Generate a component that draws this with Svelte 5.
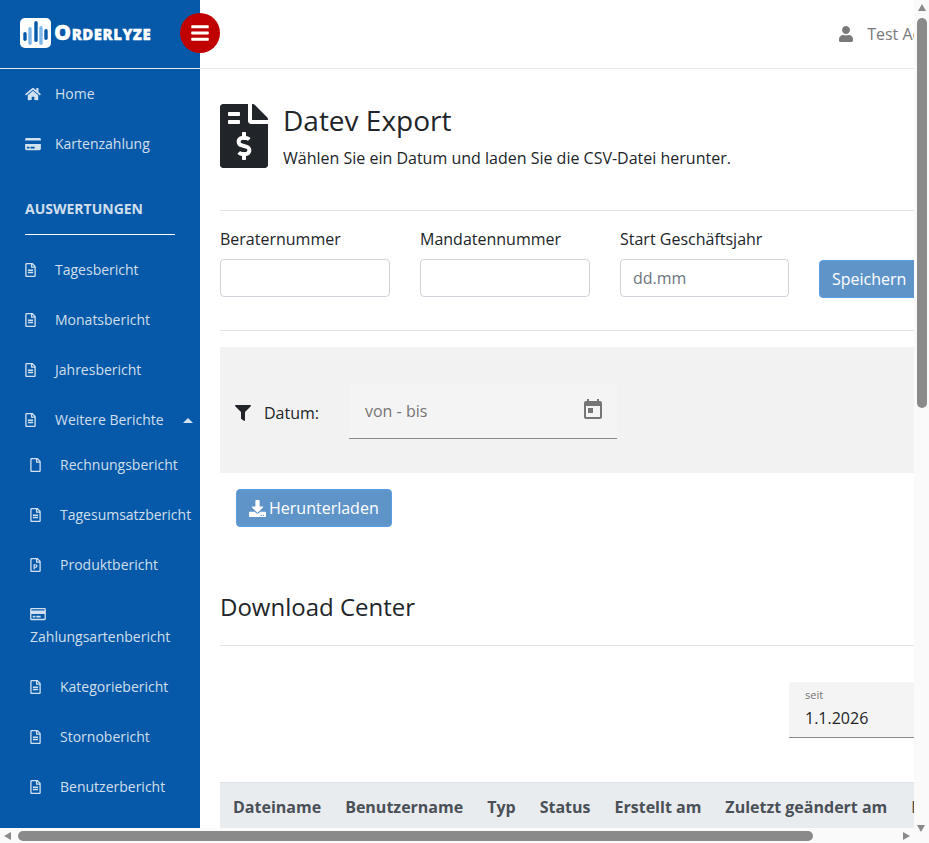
<script>
  const far = {
    fileAlt: "M288 248v28c0 6.6-5.4 12-12 12H108c-6.6 0-12-5.4-12-12v-28c0-6.6 5.4-12 12-12h168c6.6 0 12 5.4 12 12zm-12 72H108c-6.6 0-12 5.4-12 12v28c0 6.6 5.4 12 12 12h168c6.6 0 12-5.4 12-12v-28c0-6.6-5.4-12-12-12zm108-188.1V464c0 26.5-21.5 48-48 48H48c-26.5 0-48-21.5-48-48V48C0 21.5 21.5 0 48 0h204.1C264.8 0 277 5.1 286 14.1L369.9 98c9 8.9 14.1 21.2 14.1 33.9zm-128-80V128h76.1L256 51.9zM336 464V176H232c-13.3 0-24-10.7-24-24V48H48v416h288z",
    file: "M369.9 97.9L286 14C277 5 264.8-.1 252.1-.1H48C21.5 0 0 21.5 0 48v416c0 26.5 21.5 48 48 48h288c26.5 0 48-21.5 48-48V131.9c0-12.7-5.1-25-14.1-34zM332.1 128H256V51.9l76.1 76.1zM48 464V48h160v104c0 13.3 10.7 24 24 24h104v288H48z",
    filePpt: "M369.9 97.9L286 14C277 5 264.8-.1 252.1-.1H48C21.5 0 0 21.5 0 48v416c0 26.5 21.5 48 48 48h288c26.5 0 48-21.5 48-48V131.9c0-12.7-5.1-25-14.1-34zM332.1 128H256V51.9l76.1 76.1zM48 464V48h160v104c0 13.3 10.7 24 24 24h104v288H48zm72-60V236c0-6.6 5.4-12 12-12h69.2c36.7 0 62.8 27 62.8 66.3 0 74.3-68.7 66.5-95.5 66.5V404c0 6.6-5.4 12-12 12H132c-6.6 0-12-5.4-12-12zm48.5-87.4h23c7.9 0 13.9-2.4 18.1-7.2 8.5-9.8 8.4-28.5.1-37.8-4.1-4.6-9.9-7-17.4-7h-23.9v52z",
    card: "M527.9 32H48.1C21.5 32 0 53.5 0 80v352c0 26.5 21.5 48 48.1 48h479.8c26.6 0 48.1-21.5 48.1-48V80c0-26.5-21.5-48-48.1-48zM54.1 80h467.8c3.3 0 6 2.7 6 6v42H48.1V86c0-3.3 2.7-6 6-6zm467.8 352H54.1c-3.3 0-6-2.7-6-6V256h479.8v170c0 3.3-2.7 6-6 6zM192 332v40c0 6.6-5.4 12-12 12h-72c-6.6 0-12-5.4-12-12v-40c0-6.6 5.4-12 12-12h72c6.6 0 12 5.4 12 12zm192 0v40c0 6.6-5.4 12-12 12H236c-6.6 0-12-5.4-12-12v-40c0-6.6 5.4-12 12-12h136c6.6 0 12 5.4 12 12z"
  };
  const home = "M280.37 148.26L96 300.11V464a16 16 0 0 0 16 16l112.06-.29a16 16 0 0 0 15.92-16V368a16 16 0 0 1 16-16h64a16 16 0 0 1 16 16v95.64a16 16 0 0 0 16 16.05L464 480a16 16 0 0 0 16-16V300L295.67 148.26a12.19 12.19 0 0 0-15.3 0zM571.6 251.47L488 182.56V44.05a12 12 0 0 0-12-12h-56a12 12 0 0 0-12 12v72.61L318.47 43a48 48 0 0 0-61 0L4.34 251.47a12 12 0 0 0-1.6 16.9l25.5 31A12 12 0 0 0 45.15 301l235.22-193.74a12.19 12.19 0 0 1 15.3 0L530.9 301a12 12 0 0 0 16.9-1.6l25.5-31a12 12 0 0 0-1.7-16.93z";
  const cardSolid = "M0 432c0 26.5 21.5 48 48 48h480c26.5 0 48-21.5 48-48V256H0v176zm192-68c0-6.6 5.4-12 12-12h136c6.6 0 12 5.4 12 12v40c0 6.6-5.4 12-12 12H204c-6.6 0-12-5.4-12-12v-40zm-128 0c0-6.6 5.4-12 12-12h72c6.6 0 12 5.4 12 12v40c0 6.6-5.4 12-12 12H76c-6.6 0-12-5.4-12-12v-40zM576 80v48H0V80c0-26.5 21.5-48 48-48h480c26.5 0 48 21.5 48 48z";
  const bars = "M16 132h416c8.837 0 16-7.163 16-16V76c0-8.837-7.163-16-16-16H16C7.163 60 0 67.163 0 76v40c0 8.837 7.163 16 16 16zm0 160h416c8.837 0 16-7.163 16-16v-40c0-8.837-7.163-16-16-16H16c-8.837 0-16 7.163-16 16v40c0 8.837 7.163 16 16 16zm0 160h416c8.837 0 16-7.163 16-16v-40c0-8.837-7.163-16-16-16H16c-8.837 0-16 7.163-16 16v40c0 8.837 7.163 16 16 16z";
  const user = "M224 256c70.7 0 128-57.3 128-128S294.7 0 224 0 96 57.3 96 128s57.3 128 128 128zm89.6 32h-16.7c-22.2 10.2-46.9 16-72.9 16s-50.6-5.8-72.9-16h-16.7C60.2 288 0 348.2 0 422.4V464c0 26.5 21.5 48 48 48h352c26.5 0 48-21.5 48-48v-41.6c0-74.2-60.2-134.4-134.4-134.4z";
  const filter = "M487.976 0H24.028C2.71 0-8.047 25.866 7.058 40.971L192 225.941V432c0 7.831 3.821 15.17 10.237 19.662l80 55.98C298.02 518.69 320 507.493 320 487.98V225.941l184.947-184.97C520.021 25.896 509.338 0 487.976 0z";
  const download = "M216 0h80c13.3 0 24 10.7 24 24v168h87.7c17.8 0 26.7 21.5 14.1 34.1L269.7 378.3c-7.5 7.5-19.8 7.5-27.3 0L90.1 226.1c-12.6-12.6-3.7-34.1 14.1-34.1H192V24c0-13.3 10.7-24 24-24zm296 376v112c0 13.3-10.7 24-24 24H24c-13.3 0-24-10.7-24-24V376c0-13.3 10.7-24 24-24h146.7l49 49c20.1 20.1 52.5 20.1 72.6 0l49-49H488c13.3 0 24 10.7 24 24zm-124 88c0-11-9-20-20-20s-20 9-20 20 9 20 20 20 20-9 20-20zm64 0c0-11-9-20-20-20s-20 9-20 20 9 20 20 20 20-9 20-20z";
  const invoice = "M377 105L279.1 7c-4.5-4.5-10.6-7-17-7H256v128h128v-6.1c0-6.3-2.5-12.4-7-16.9zm-153 31V0H24C10.7 0 0 10.7 0 24v464c0 13.3 10.7 24 24 24h336c13.3 0 24-10.7 24-24V160H248c-13.2 0-24-10.8-24-24zM64 72c0-4.42 3.58-8 8-8h80c4.42 0 8 3.58 8 8v16c0 4.42-3.58 8-8 8H72c-4.42 0-8-3.58-8-8V72zm0 80v-16c0-4.42 3.58-8 8-8h80c4.42 0 8 3.58 8 8v16c0 4.42-3.58 8-8 8H72c-4.42 0-8-3.58-8-8zm144 263.88V440c0 4.42-3.58 8-8 8h-16c-4.42 0-8-3.58-8-8v-24.29c-11.29-.58-22.27-4.52-31.37-11.35-3.9-2.93-4.1-8.77-.57-12.14l11.75-11.21c2.77-2.64 6.89-2.76 10.13-.73 3.87 2.42 8.26 3.72 12.82 3.72h28.11c6.5 0 11.8-5.92 11.8-13.19 0-5.95-3.61-11.19-8.77-12.73l-45-13.5c-18.59-5.58-31.58-23.42-31.58-43.39 0-24.52 19.05-44.44 42.67-45.07V232c0-4.42 3.58-8 8-8h16c4.42 0 8 3.58 8 8v24.29c11.29.58 22.27 4.51 31.37 11.35 3.9 2.93 4.1 8.77.57 12.14l-11.75 11.21c-2.77 2.64-6.89 2.76-10.13.73-3.87-2.43-8.26-3.72-12.82-3.72h-28.11c-6.5 0-11.8 5.92-11.8 13.19 0 5.95 3.61 11.19 8.77 12.73l45 13.5c18.59 5.58 31.58 23.42 31.58 43.39 0 24.53-19.05 44.44-42.67 45.07z";

  const reports = ["Tagesbericht", "Monatsbericht", "Jahresbericht"];
  const subReports = [
    { label: "Rechnungsbericht", icon: far.file },
    { label: "Tagesumsatzbericht", icon: far.fileAlt },
    { label: "Produktbericht", icon: far.filePpt },
    { label: "Zahlungsartenbericht", icon: far.card, wide: true },
    { label: "Kategoriebericht", icon: far.fileAlt },
    { label: "Stornobericht", icon: far.fileAlt },
    { label: "Benutzerbericht", icon: far.fileAlt }
  ];
  const columns = ["Dateiname", "Benutzername", "Typ", "Status", "Erstellt am", "Zuletzt geändert am", "Download"];
</script>

<div class="window">
  <div class="viewport">
    <div class="page">
      <aside class="sidebar">
        <div class="brand">
          <svg class="logo" viewBox="0 0 31 30" aria-hidden="true">
            <rect width="31" height="30" rx="5" fill="#fff" />
            <rect x="3.3" y="14" width="3.4" height="9" rx="1.7" fill="#0559a8" />
            <rect x="8.3" y="9" width="3.4" height="18" rx="1.7" fill="#7fb8ea" />
            <rect x="14.3" y="3" width="3.4" height="21" rx="1.7" fill="#0559a8" />
            <rect x="19.3" y="8" width="3.4" height="19" rx="1.7" fill="#7fb8ea" />
            <rect x="24.3" y="11" width="3.4" height="11" rx="1.7" fill="#0559a8" />
          </svg>
          <span class="wordmark">Orderlyze</span>
        </div>
        <nav>
          <a class="item" href="#home"><svg class="ico wide" viewBox="0 0 576 512"><path d={home} /></svg><span>Home</span></a>
          <a class="item" href="#karte"><svg class="ico wide" viewBox="0 0 576 512"><path d={cardSolid} /></svg><span>Kartenzahlung</span></a>
          <div class="section">AUSWERTUNGEN</div>
          {#each reports as r}
            <a class="item" href="#r"><svg class="ico" viewBox="0 0 384 512"><path d={far.fileAlt} /></svg><span>{r}</span></a>
          {/each}
          <a class="item open" href="#more">
            <svg class="ico" viewBox="0 0 384 512"><path d={far.fileAlt} /></svg><span>Weitere Berichte</span>
            <i class="caret"></i>
          </a>
          <div class="sub">
            {#each subReports as s}
              <a class="item" class:stacked={s.wide} href="#s">
                <svg class="ico" class:wide={s.wide} viewBox={s.wide ? "0 0 576 512" : "0 0 384 512"}><path d={s.icon} /></svg><span>{s.label}</span>
              </a>
            {/each}
          </div>
        </nav>
      </aside>

      <div class="main">
        <header class="topbar">
          <button class="toggle" aria-label="Menü">
            <svg viewBox="0 0 448 512"><path d={bars} /></svg>
          </button>
          <div class="account">
            <svg viewBox="0 0 448 512"><path d={user} /></svg>
            <span>Test Admin</span>
          </div>
        </header>

        <section class="content">
          <div class="title">
            <svg class="title-icon" viewBox="0 0 384 512"><path d={invoice} /></svg>
            <div>
              <h1>Datev Export</h1>
              <p>Wählen Sie ein Datum und laden Sie die CSV-Datei herunter.</p>
            </div>
          </div>

          <hr class="rule-title" />

          <div class="form">
            <label>Beraternummer<input type="text" /></label>
            <label>Mandatennummer<input type="text" /></label>
            <label>Start Geschäftsjahr<input type="text" placeholder="dd.mm" /></label>
            <button class="btn save">Speichern</button>
          </div>

          <hr class="rule-form" />

          <div class="filter">
            <svg class="filter-icon" viewBox="0 0 512 512"><path d={filter} /></svg>
            <span class="filter-label">Datum:</span>
            <div class="range">
              <span>von - bis</span>
              <svg viewBox="0 0 24 24"><path d="M19 3h-1V1h-2v2H8V1H6v2H5c-1.11 0-1.99.9-1.99 2L3 19c0 1.1.89 2 2 2h14c1.1 0 2-.9 2-2V5c0-1.1-.9-2-2-2zm0 16H5V8h14v11zM7 10h5v5H7z" /></svg>
            </div>
          </div>

          <button class="btn dl">
            <svg viewBox="0 0 512 512"><path d={download} /></svg>Herunterladen
          </button>

          <h2>Download Center</h2>
          <hr class="rule-dc" />

          <div class="since-row">
            <div class="since">
              <small>seit</small>
              <span>1.1.2026</span>
            </div>
          </div>

          <table>
            <thead>
              <tr>
                {#each columns as c}<th>{c}</th>{/each}
              </tr>
            </thead>
          </table>
        </section>
      </div>
    </div>
  </div>

  <div class="vbar">
    <i class="arrow up"></i>
    <div class="vthumb"></div>
    <i class="arrow down"></i>
  </div>
  <div class="hbar">
    <i class="arrow left"></i>
    <div class="hthumb"></div>
    <i class="arrow right"></i>
  </div>
  <div class="corner"></div>
</div>

<style>
  :global(body) {
    margin: 0;
    font-family: "Open Sans", "Noto Sans", sans-serif;
    color: #212529;
    background: #fff;
  }

  .window {
    width: 929px;
    height: 843px;
    display: grid;
    grid-template-columns: 914px 15px;
    grid-template-rows: 828px 15px;
    overflow: hidden;
  }

  .viewport {
    overflow: hidden;
  }

  .page {
    display: flex;
    width: 1017px;
    min-height: 828px;
  }

  /* sidebar */
  .sidebar {
    flex: 0 0 200px;
    background: #0559a8;
    color: rgba(255, 255, 255, 0.82);
    font-size: 14px;
    height: 828px;
  }

  .brand {
    border-bottom: 1px solid #e8e8e8;
    display: flex;
    align-items: center;
    padding-left: 20px;
    box-sizing: border-box;
    height: 69px;
    gap: 3px;
  }

  .logo {
    width: 31px;
    height: 30px;
    margin-top: -3px;
  }

  .wordmark {
    font-variant: small-caps;
    font-weight: 800;
    font-size: 21.5px;
    letter-spacing: 0.5px;
    color: #fff;
    margin-top: -6px;
    -webkit-text-stroke: 0.3px #fff;
  }

  .item {
    display: block;
    padding: 13.5px 0 15.5px 25px;
    line-height: 21px;
    color: inherit;
    text-decoration: none;
    position: relative;
  }

  .ico {
    width: 11px;
    height: 14px;
    fill: currentColor;
    margin-right: 19px;
    vertical-align: -2px;
  }

  .ico.wide {
    width: 16px;
    margin-right: 14px;
  }

  .section {
    margin: 30px 25px 10px;
    padding-bottom: 15px;
    border-bottom: 1px solid #fff;
    font-weight: 700;
    font-size: 14px;
    line-height: 20px;
  }

  .caret {
    position: absolute;
    right: 7px;
    top: 23px;
    border: 5px solid transparent;
    border-top: 0;
    border-bottom-color: currentColor;
  }

  .sub {
    margin-top: -5px;
  }

  .sub .item {
    padding-left: 30px;
  }

  .sub .item.stacked {
    padding-top: 17px;
    padding-bottom: 15.5px;
  }

  .stacked .ico.wide {
    display: block;
    margin: 0 0 4.5px;
  }

  /* main */
  .main {
    flex: 1;
    min-width: 0;
  }

  .topbar {
    height: 69px;
    box-sizing: border-box;
    border-bottom: 1px solid #ece6e6;
    display: flex;
    align-items: flex-start;
    justify-content: space-between;
  }

  .toggle {
    width: 40px;
    height: 40px;
    margin: 13px 0 0 -20px;
    padding: 0;
    border: 0;
    border-radius: 50%;
    background: #c00000;
    display: flex;
    align-items: center;
    justify-content: center;
  }

  .toggle svg {
    width: 18px;
    height: 20px;
    fill: #fff;
  }

  .account {
    display: flex;
    align-items: center;
    gap: 14px;
    margin: 24px 66px 0 0;
    color: #7a7a7a;
    font-size: 16px;
    line-height: 20px;
  }

  .account svg {
    width: 14px;
    height: 16px;
    fill: #7a7a7a;
  }

  .content {
    padding: 35px 0 0 20px;
  }

  .title {
    display: flex;
    gap: 15px;
  }

  .title-icon {
    width: 48px;
    height: 64px;
    fill: #212529;
    flex: none;
  }

  h1 {
    margin: -1px 0 0;
    font-size: 28px;
    font-weight: 400;
    line-height: 34px;
  }

  .title p {
    margin: 10px 0 0;
    font-size: 16px;
    line-height: 22px;
  }

  hr {
    border: 0;
    border-top: 1px solid #dee2e6;
    margin: 0;
  }

  .rule-title {
    margin-top: 41px;
  }

  .form {
    display: grid;
    grid-template-columns: 200px 200px 199px 120px;
    margin-top: 18px;
    align-items: end;
  }

  label {
    display: flex;
    flex-direction: column;
    gap: 9px;
    font-size: 16px;
    line-height: 21px;
  }

  input {
    width: calc(100% - 30px);
    height: 38px;
    box-sizing: border-box;
    border: 1px solid #ced4da;
    border-radius: 4px;
    padding: 6px 12px;
    font: 400 16px "Open Sans", sans-serif;
    color: #495057;
  }

  input::placeholder {
    color: #6c757d;
  }

  .btn {
    font: 500 16px/24px "Open Sans", sans-serif;
    color: #fff;
    background: #5f94c9;
    border: 1px solid #5a9ee6;
    border-radius: 4px;
    height: 38px;
    padding: 0 12px;
    box-sizing: border-box;
  }

  .save {
    width: 100px;
    margin-bottom: -1px;
  }

  .rule-form {
    margin-top: 33px;
  }

  .filter {
    margin-top: 16px;
    height: 126px;
    background: #f2f2f2;
    display: flex;
    align-items: flex-start;
    padding: 37px 0 0 15px;
    box-sizing: border-box;
  }

  .filter-icon {
    width: 16px;
    height: 16px;
    fill: #212529;
    margin-top: 21px;
  }

  .filter-label {
    margin: 18px 30px 0 13px;
    font-size: 16px;
    line-height: 22px;
    width: 55px;
  }

  .range {
    width: 268px;
    height: 55px;
    box-sizing: border-box;
    background: #f4f4f4;
    border-bottom: 1px solid #8a8a8a;
    display: flex;
    align-items: center;
    justify-content: space-between;
    padding: 0 12px 1px 16px;
    color: #757575;
    font-size: 16px;
  }

  .range svg {
    width: 24px;
    height: 24px;
    fill: #757575;
    margin-top: -2px;
  }

  .dl {
    display: flex;
    align-items: center;
    margin: 16px 0 0 16px;
    gap: 3px;
  }

  .dl svg {
    width: 17px;
    height: 17px;
    fill: #fff;
  }

  h2 {
    margin: 63px 0 0;
    font-size: 24px;
    font-weight: 400;
    line-height: 34px;
  }

  .rule-dc {
    margin-top: 21px;
  }

  .since-row {
    margin-top: 36px;
    padding-left: 569px;
  }

  .since {
    height: 56px;
    box-sizing: border-box;
    background: #f4f4f4;
    border-bottom: 1px solid #8a8a8a;
    border-radius: 4px 4px 0 0;
    padding: 6px 16px 0;
    display: flex;
    flex-direction: column;
  }

  .since small {
    font-size: 11px;
    line-height: 14px;
    color: #757575;
  }

  .since span {
    font-size: 16px;
    line-height: 24px;
    margin-top: 4px;
  }

  table {
    margin-top: 44px;
    border-collapse: collapse;
    width: 100%;
  }

  th {
    background: #e9ecef;
    border-top: 1px solid #dee2e6;
    color: #495057;
    font-size: 16px;
    font-weight: 700;
    text-align: left;
    white-space: nowrap;
    padding: 13px 12px 19px;
    line-height: 22px;
  }

  th:first-child {
    padding-left: 13px;
  }

  th:last-child {
    width: 100%;
  }

  /* scrollbars */
  .vbar,
  .hbar,
  .corner {
    background: #fafafa;
  }

  .vbar {
    grid-column: 2;
    grid-row: 1;
    display: flex;
    flex-direction: column;
    align-items: center;
    padding-top: 4px;
    position: relative;
  }

  .vthumb {
    width: 10px;
    height: 390px;
    margin-top: 7px;
    background: #8a8a8a;
    border-radius: 5px;
  }

  .hbar {
    grid-column: 1;
    grid-row: 2;
    display: flex;
    align-items: center;
    padding-left: 4px;
    position: relative;
  }

  .hthumb {
    width: 795px;
    height: 10px;
    margin-left: 7px;
    background: #8a8a8a;
    border-radius: 5px;
  }

  .arrow {
    display: block;
    width: 0;
    height: 0;
    border: 4.5px solid transparent;
  }

  .arrow.up {
    border-top: 0;
    border-bottom: 7px solid #8a8a8a;
  }

  .arrow.down {
    position: absolute;
    bottom: -4px;
    left: 3px;
    border-bottom: 0;
    border-top: 7px solid #8a8a8a;
  }

  .arrow.left {
    border-left: 0;
    border-right: 7px solid #8a8a8a;
  }

  .arrow.right {
    position: absolute;
    right: 4px;
    border-right: 0;
    border-left: 7px solid #8a8a8a;
  }
</style>
